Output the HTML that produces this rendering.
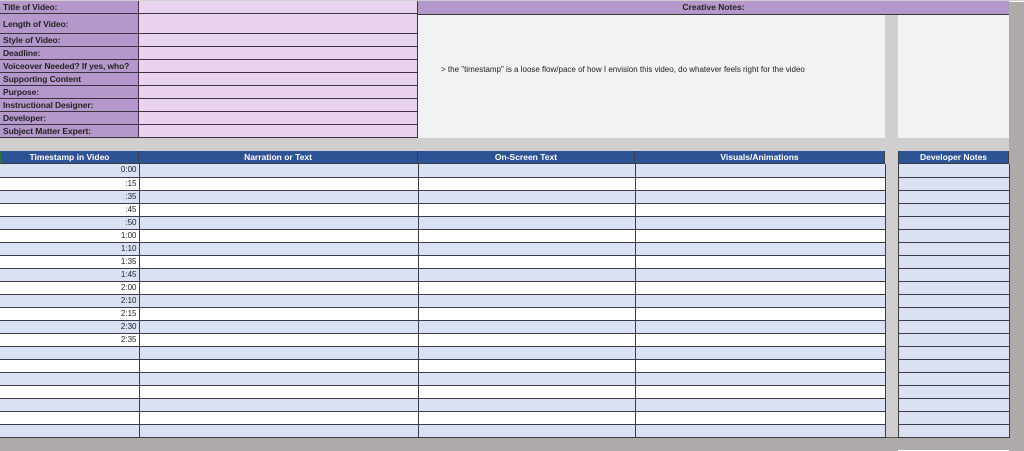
<!DOCTYPE html>
<html><head><meta charset="utf-8"><style>
*{box-sizing:border-box;margin:0;padding:0}
body{width:1024px;height:451px;background:#fff;position:relative;overflow:hidden;font-family:"Liberation Sans",sans-serif;font-size:8.5px;color:#222}
.a{position:absolute}
.lab{position:absolute;left:0;width:139px;background:#b598cb;border-bottom:1px solid #3a3340;border-right:1px solid #3a3340;font-weight:bold;padding-left:3px;display:flex;align-items:center;letter-spacing:-0.1px}
.val{position:absolute;left:139px;width:279px;background:#e9d3ee;border-bottom:1px solid #3a3340;border-right:1px solid #3a3340}
table{position:absolute;left:0;top:164px;border-collapse:collapse;table-layout:fixed;width:1009px}
td{height:13px;padding:0;border-bottom:1px solid #3a3d45;border-right:1px solid #3a3d45;font-size:8px;line-height:12px}
td.t{text-align:right;padding-right:2px}
td.g{background:transparent;border:none}
td.d{background:#dae1f3;border-left:1px solid #3a3d45}
tr.b td{background:#dae1f3}
tr.b td.g{background:transparent}
.h{position:absolute;top:151px;height:13px;background:#2e5394;color:#fff;font-weight:bold;text-align:center;line-height:12px;border-bottom:1px solid #3a3d45;border-right:1px solid #3a3d45}
</style></head><body>
<div class="a" style="left:0;top:0;width:1024px;height:1px;background:#cfcfcf"></div>
<div class="lab" style="top:1px;height:13px">Title of Video:</div><div class="val" style="top:1px;height:13px"></div>
<div class="lab" style="top:14px;height:20px">Length of Video:</div><div class="val" style="top:14px;height:20px"></div>
<div class="lab" style="top:34px;height:13px">Style of Video:</div><div class="val" style="top:34px;height:13px"></div>
<div class="lab" style="top:47px;height:13px">Deadline:</div><div class="val" style="top:47px;height:13px"></div>
<div class="lab" style="top:60px;height:13px">Voiceover Needed? If yes, who?</div><div class="val" style="top:60px;height:13px"></div>
<div class="lab" style="top:73px;height:13px">Supporting Content</div><div class="val" style="top:73px;height:13px"></div>
<div class="lab" style="top:86px;height:13px">Purpose:</div><div class="val" style="top:86px;height:13px"></div>
<div class="lab" style="top:99px;height:13px">Instructional Designer:</div><div class="val" style="top:99px;height:13px"></div>
<div class="lab" style="top:112px;height:13px">Developer:</div><div class="val" style="top:112px;height:13px"></div>
<div class="lab" style="top:125px;height:13px">Subject Matter Expert:</div><div class="val" style="top:125px;height:13px"></div>
<div class="a" style="left:418px;top:1px;width:591px;height:14px;background:#b598cb;border-bottom:1px solid #3a3340;font-weight:bold;text-align:center;line-height:13px">Creative Notes:</div>
<div class="a" style="left:418px;top:15px;width:467px;height:123px;background:#f2f2f2;font-size:8px;padding-left:23px;line-height:110px;white-space:nowrap">&gt; the "timestamp" is a loose flow/pace of how I envision this video, do whatever feels right for the video</div>
<div class="a" style="left:885px;top:15px;width:13px;height:423px;background:#d0cece"></div>
<div class="a" style="left:898px;top:15px;width:111px;height:123px;background:#f2f2f2"></div>
<div class="a" style="left:0;top:138px;width:1009px;height:13px;background:#d0cece"></div>
<div class="a" style="left:1009px;top:2px;width:15px;height:449px;background:#aeaaaa"></div>
<div class="a" style="left:0;top:437px;width:898px;height:14px;background:#aeaaaa;border-top:1px solid #555"></div>
<div class="a" style="left:898px;top:437px;width:111px;height:13px;background:#aeaaaa"></div>

<div class="h" style="left:0;width:139px;border-left:1px solid #2a7a3a">Timestamp in Video</div>
<div class="h" style="left:139px;width:279px">Narration or Text</div>
<div class="h" style="left:418px;width:217px">On-Screen Text</div>
<div class="h" style="left:635px;width:250px">Visuals/Animations</div>
<div class="h" style="left:898px;width:111px;border-left:1px solid #3a3d45">Developer Notes</div>

<table>
<colgroup><col style="width:139px"><col style="width:279px"><col style="width:217px"><col style="width:250px"><col style="width:13px"><col style="width:111px"></colgroup>
<tr class="b"><td class="t">0:00</td><td></td><td></td><td></td><td class="g"></td><td class="d"></td></tr>
<tr><td class="t">:15</td><td></td><td></td><td></td><td class="g"></td><td class="d"></td></tr>
<tr class="b"><td class="t">:35</td><td></td><td></td><td></td><td class="g"></td><td class="d"></td></tr>
<tr><td class="t">:45</td><td></td><td></td><td></td><td class="g"></td><td class="d"></td></tr>
<tr class="b"><td class="t">:50</td><td></td><td></td><td></td><td class="g"></td><td class="d"></td></tr>
<tr><td class="t">1:00</td><td></td><td></td><td></td><td class="g"></td><td class="d"></td></tr>
<tr class="b"><td class="t">1:10</td><td></td><td></td><td></td><td class="g"></td><td class="d"></td></tr>
<tr><td class="t">1:35</td><td></td><td></td><td></td><td class="g"></td><td class="d"></td></tr>
<tr class="b"><td class="t">1:45</td><td></td><td></td><td></td><td class="g"></td><td class="d"></td></tr>
<tr><td class="t">2:00</td><td></td><td></td><td></td><td class="g"></td><td class="d"></td></tr>
<tr class="b"><td class="t">2:10</td><td></td><td></td><td></td><td class="g"></td><td class="d"></td></tr>
<tr><td class="t">2:15</td><td></td><td></td><td></td><td class="g"></td><td class="d"></td></tr>
<tr class="b"><td class="t">2:30</td><td></td><td></td><td></td><td class="g"></td><td class="d"></td></tr>
<tr><td class="t">2:35</td><td></td><td></td><td></td><td class="g"></td><td class="d"></td></tr>
<tr class="b"><td class="t"></td><td></td><td></td><td></td><td class="g"></td><td class="d"></td></tr>
<tr><td class="t"></td><td></td><td></td><td></td><td class="g"></td><td class="d"></td></tr>
<tr class="b"><td class="t"></td><td></td><td></td><td></td><td class="g"></td><td class="d"></td></tr>
<tr><td class="t"></td><td></td><td></td><td></td><td class="g"></td><td class="d"></td></tr>
<tr class="b"><td class="t"></td><td></td><td></td><td></td><td class="g"></td><td class="d"></td></tr>
<tr><td class="t"></td><td></td><td></td><td></td><td class="g"></td><td class="d"></td></tr>
<tr class="b"><td class="t"></td><td></td><td></td><td></td><td class="g"></td><td class="d"></td></tr>
</table>
</body></html>
